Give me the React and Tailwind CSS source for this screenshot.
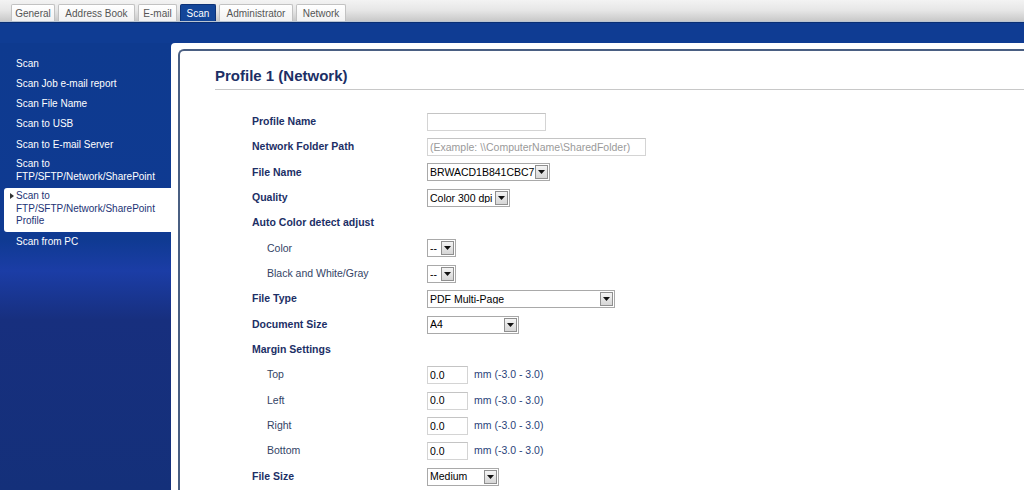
import React from 'react';

const tabs = [
  { label: 'General', w: 'w-[44px]' },
  { label: 'Address Book', w: 'w-[77px]' },
  { label: 'E-mail', w: 'w-[39px]' },
  { label: 'Scan', w: 'w-[36px]', active: true },
  { label: 'Administrator', w: 'w-[74px]' },
  { label: 'Network', w: 'w-[50px]' },
];

const menu = [
  { lines: ['Scan'] },
  { lines: ['Scan Job e-mail report'] },
  { lines: ['Scan File Name'] },
  { lines: ['Scan to USB'] },
  { lines: ['Scan to E-mail Server'] },
  { lines: ['Scan to', 'FTP/SFTP/Network/SharePoint'] },
  { lines: ['Scan to', 'FTP/SFTP/Network/SharePoint', 'Profile'], active: true },
  { lines: ['Scan from PC'] },
];

function Select({ value, w }) {
  return (
    <div className={`${w} h-[18px] flex items-center border border-[#a9a9a9] bg-white pl-[2px] pr-[1px]`}>
      <span className="flex-1 overflow-hidden whitespace-nowrap text-[10.5px] text-black leading-none">{value}</span>
      <span className="w-[13px] h-[14px] shrink-0 border border-[#8f8f8f] bg-gradient-to-b from-[#f4f4f4] to-[#d6d6d6] flex items-center justify-center">
        <svg width="7" height="4" viewBox="0 0 7 4"><path d="M0 0h7L3.5 4z" fill="#111" /></svg>
      </span>
    </div>
  );
}

function TextInput({ value, placeholder, w }) {
  return (
    <div className={`${w} h-[18px] flex items-center border border-[#d4d4d4] border-t-[#c4c4c4] bg-white px-[2px] overflow-hidden`}>
      {placeholder ? (
        <span className="text-[10.5px] text-[#9a9a9a] leading-none whitespace-nowrap">{placeholder}</span>
      ) : (
        <span className="text-[10.5px] text-black leading-none">{value}</span>
      )}
    </div>
  );
}

function Row({ label, sub, children }) {
  return (
    <div className="grid grid-cols-[175px_1fr] h-[25.36px] items-center">
      <div
        className={
          sub
            ? 'pl-[15px] text-[10.5px] text-[#334466]'
            : 'text-[10.5px] font-bold text-[#1c2f66]'
        }
      >
        {label}
      </div>
      <div className="flex items-center">{children}</div>
    </div>
  );
}

function Margin({ label }) {
  return (
    <Row label={label} sub>
      <TextInput value="0.0" w="w-[41px]" />
      <span className="ml-[6px] text-[10.5px] text-[#2a3f7a]">mm (-3.0 - 3.0)</span>
    </Row>
  );
}

export default function App() {
  return (
    <div className="w-[1024px] h-[490px] overflow-hidden bg-white font-['Liberation_Sans',Arial,sans-serif] flex flex-col">
      {/* tab bar */}
      <div className="h-[22px] shrink-0 bg-gradient-to-b from-[#f3f3f3] via-[#e6e6e6] to-[#c9c9c9] flex items-end pl-[11px] gap-[3px] border-b border-[#b9c4d2]">
        {tabs.map((t) => (
          <div
            key={t.label}
            className={`${t.w} h-[17px] flex items-center justify-center rounded-t-[2px] text-[10px] ${
              t.active
                ? 'bg-[#134699] text-white border border-[#0c3277] border-b-0'
                : 'bg-gradient-to-b from-white to-[#f2f2f2] text-[#555] border border-[#c2c2c2] border-b-0'
            }`}
          >
            {t.label}
          </div>
        ))}
      </div>

      <div className="flex-1 flex flex-col bg-[#0e3a8f]">
        {/* blue band */}
        <div className="h-[21px] shrink-0 bg-[#0f3c93] border-t border-[#0a2f74]" />

        <div className="flex-1 flex min-h-0">
          {/* sidebar */}
          <div className="w-[171px] shrink-0 bg-[linear-gradient(to_bottom,#0e3a8f_0%,#0f3a92_44%,#1b3da6_51%,#172f7e_62%,#14307a_100%)] pt-[10px]">
            {menu.map((m, i) =>
              m.active ? (
                <div
                  key={i}
                  className="relative mt-[2px] ml-[4px] bg-white rounded-l-[3px] pl-[12px] pt-[2px] pb-[4px] text-[10px] leading-[12.5px] text-[#1d3375]"
                >
                  <span className="absolute left-[6px] top-[5px] w-0 h-0 border-y-[3px] border-y-transparent border-l-[4px] border-l-[#333]" />
                  {m.lines.map((l) => (
                    <div key={l}>{l}</div>
                  ))}
                </div>
              ) : (
                <div
                  key={i}
                  className={`pl-[16px] text-[10px] text-white ${
                    m.lines.length > 1 ? 'py-[3px] leading-[13px]' : 'h-[20.25px] flex items-center'
                  }`}
                >
                  {m.lines.map((l) => (
                    <div key={l}>{l}</div>
                  ))}
                </div>
              )
            )}
          </div>

          {/* content panel */}
          <div className="flex-1 bg-white rounded-tl-[4px] pl-[7px] pt-[6px]">
            <div className="h-full border-l-2 border-t-2 border-[#4a5f82] rounded-tl-[6px] pl-[35px]">
              <div className="h-[39px] flex items-end border-b border-[#c8c8c8] pb-[4px]">
                <h1 className="text-[15px] leading-[18px] font-bold text-[#1c2f66]">Profile 1 (Network)</h1>
              </div>
              <div className="pl-[37px] pt-[19px]">
                <Row label="Profile Name">
                  <TextInput value="" w="w-[119px]" />
                </Row>
                <Row label="Network Folder Path">
                  <TextInput placeholder="(Example: \\ComputerName\SharedFolder)" w="w-[219px]" />
                </Row>
                <Row label="File Name">
                  <Select value="BRWACD1B841CBC7" w="w-[123px]" />
                </Row>
                <Row label="Quality">
                  <Select value="Color 300 dpi" w="w-[83px]" />
                </Row>
                <Row label="Auto Color detect adjust" />
                <Row label="Color" sub>
                  <Select value="--" w="w-[29px]" />
                </Row>
                <Row label="Black and White/Gray" sub>
                  <Select value="--" w="w-[29px]" />
                </Row>
                <Row label="File Type">
                  <Select value="PDF Multi-Page" w="w-[188px]" />
                </Row>
                <Row label="Document Size">
                  <Select value="A4" w="w-[92px]" />
                </Row>
                <Row label="Margin Settings" />
                <Margin label="Top" />
                <Margin label="Left" />
                <Margin label="Right" />
                <Margin label="Bottom" />
                <Row label="File Size">
                  <Select value="Medium" w="w-[72px]" />
                </Row>
              </div>
            </div>
          </div>
        </div>
      </div>
    </div>
  );
}
